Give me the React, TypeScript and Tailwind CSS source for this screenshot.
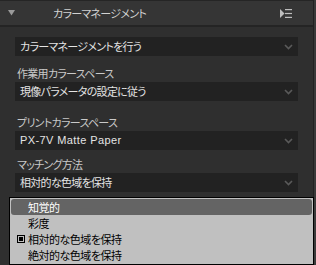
import React from 'react';

const jp = "[font-family:'Noto_Sans_CJK_JP','Noto_Sans',sans-serif] [font-feature-settings:'palt']";

function Chevron() {
  return (
    <svg width="9" height="6" viewBox="0 0 9 6" className="shrink-0">
      <path d="M1 1 L4.5 4.5 L8 1" fill="none" stroke="#5a5a5a" strokeWidth="1.6" />
    </svg>
  );
}

function Select({ value, latin }: { value: string; latin?: boolean }) {
  return (
    <div className="mx-[15px] h-[19px] bg-[#222222] flex items-center pl-[5px] pr-[5px]">
      <span
        className={`flex-1 text-[11px] leading-[19px] text-[#e4e4e4] whitespace-nowrap ${
          latin ? "[font-family:'Liberation_Sans',sans-serif] tracking-[0.4px]" : 'tracking-[-0.7px]'
        }`}
      >
        {value}
      </span>
      <Chevron />
    </div>
  );
}

function Label({ text, className }: { text: string; className?: string }) {
  return (
    <div className={`pl-[17px] h-[18px] text-[11px] leading-[18px] tracking-[-0.7px] text-[#c9c9c9] whitespace-nowrap ${className ?? ''}`}>
      {text}
    </div>
  );
}

const items = ['知覚的', '彩度', '相対的な色域を保持', '絶対的な色域を保持'];

export default function App() {
  return (
    <div className={`relative w-[316px] h-[265px] overflow-hidden flex bg-[#2f2f2f] ${jp}`}>
      <div className="w-[313px] flex flex-col">
        {/* Header */}
        <div className="h-[27px] bg-[#353535] border-t border-t-[#252525] border-b-2 border-b-[#242424] flex items-center pl-[8px] pr-[21px]">
          <svg width="7" height="6" viewBox="0 0 7 6" className="shrink-0">
            <path d="M0 0 H7 L3.5 5.5 Z" fill="#9a9a9a" />
          </svg>
          <div className="flex-1 pl-[38px] text-[11px] tracking-[-0.7px] text-[#d2d2d2] leading-[24px]">カラーマネージメント</div>
          <svg width="12" height="9" viewBox="0 0 12 9" className="shrink-0">
            <path d="M0 0 L4.5 4.5 L0 9 Z" fill="#bdbdbd" />
            <rect x="5" y="0" width="7" height="1.2" fill="#bdbdbd" />
            <rect x="5" y="3.9" width="7" height="1.2" fill="#bdbdbd" />
            <rect x="5" y="7.8" width="7" height="1.2" fill="#bdbdbd" />
          </svg>
        </div>

        {/* Body */}
        <div className="pt-[10px] flex flex-col">
          <Select value="カラーマネージメントを行う" />
          <Label text="作業用カラースペース" className="mt-[8px]" />
          <Select value="現像パラメータの設定に従う" />
          <Label text="プリントカラースペース" className="mt-[12px]" />
          <Select value="PX-7V Matte Paper" latin />
          <Label text="マッチング方法" className="mt-[5px]" />
          <Select value="相対的な色域を保持" />
        </div>
      </div>
      <div className="w-[3px] border-l border-l-[#222222] bg-[#3a3a3a]" />

      {/* Dropdown popup */}
      <div className="absolute left-[9px] top-[197px] w-[305px] h-[68px] bg-[#c0c0c0] border border-black px-[1px] pt-[1px]">
        {items.map((it, i) => (
          <div
            key={it}
            className={`h-[16px] flex items-center rounded-[3px] ${i === 0 ? 'bg-[#646464] text-white' : 'text-black'}`}
          >
            <div className="w-[17px] flex justify-center pl-[3px]">
              {i === 2 && (
                <div className="w-[8px] h-[8px] border border-black p-[1px] bg-[#c0c0c0]">
                  <div className="w-full h-full bg-black" />
                </div>
              )}
            </div>
            <span className="text-[11px] leading-[16px] tracking-[-0.5px] whitespace-nowrap">{it}</span>
          </div>
        ))}
      </div>
    </div>
  );
}
